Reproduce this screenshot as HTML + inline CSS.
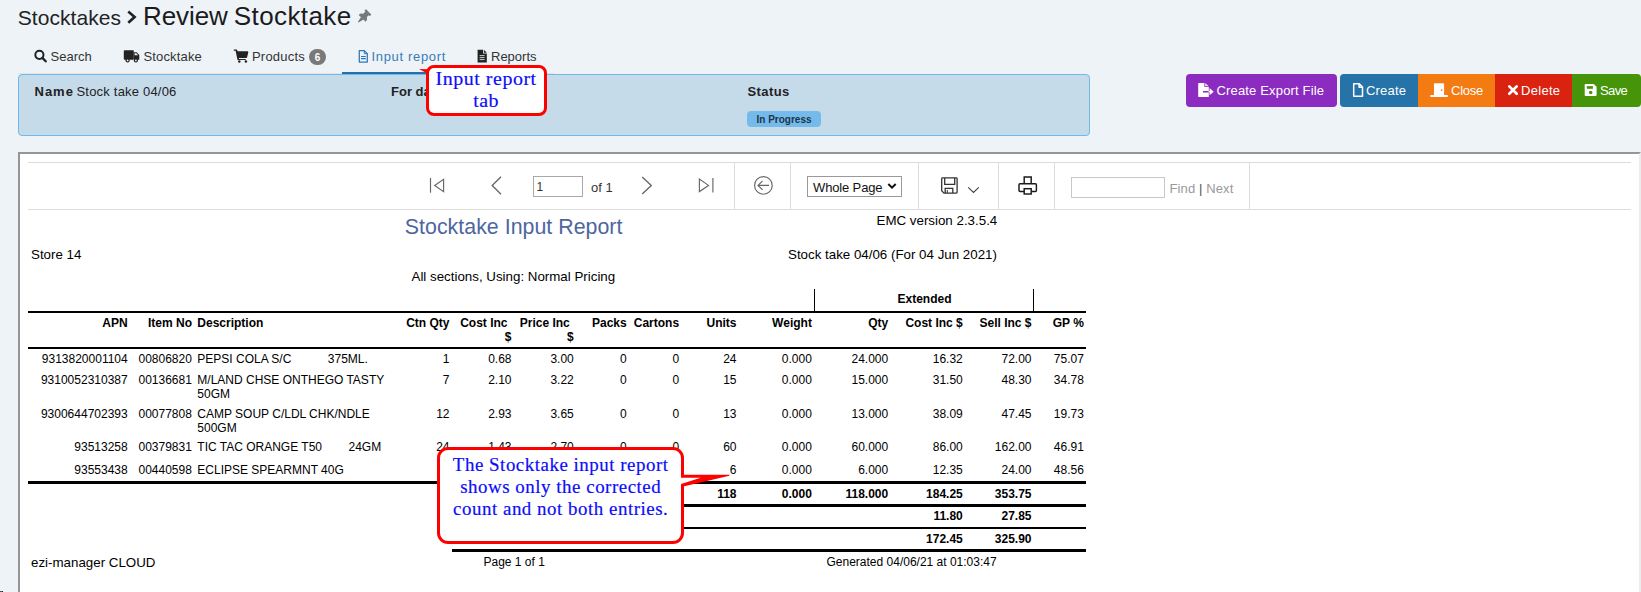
<!DOCTYPE html>
<html lang="en">
<head>
<meta charset="utf-8">
<title>Review Stocktake</title>
<style>
*{box-sizing:border-box;margin:0;padding:0}
html,body{width:1641px;height:592px;overflow:hidden}
body{background:#eef3f8;font-family:"Liberation Sans",sans-serif;color:#222;position:relative}
.a{position:absolute;white-space:nowrap;line-height:1}
svg{position:absolute;overflow:visible}
/* header */
.h-crumb{left:17.7px;top:7px;font-size:21px;color:#222;letter-spacing:0.08px}
.h-title{left:143px;top:3px;font-size:26px;color:#1b1b1b;letter-spacing:0.11px}
.tab{font-size:13px;color:#333;top:50px}
.tab.act{color:#3a7bb5}
/* panel */
.panel{left:18px;top:74px;width:1072px;height:62px;background:#c6dbea;border:1px solid #70b9e8;border-radius:4px}
.lbl{font-size:13px;font-weight:bold;color:#222}
.val{font-size:13px;color:#222}
.badge6{left:309.2px;top:48.6px;width:16.8px;height:16.6px;border-radius:8.4px;background:#797979;color:#fff;font-size:10px;font-weight:bold;text-align:center;line-height:18.4px}
.status{left:747px;top:111px;width:74px;height:16px;border-radius:4px;background:#74bbec;color:#1e3548;font-size:10px;font-weight:bold;text-align:center;line-height:17.2px}
/* buttons */
.btn{top:74px;height:33px;color:#fff;font-size:13px}
.btn span{position:absolute;top:10px;line-height:13px;white-space:nowrap}
/* iframe */
.frame{left:18px;top:152px;width:1623px;height:460px;background:#fff;border-style:solid;border-width:2px;border-color:#969696 #ececec #ececec #969696}
.hl{background:#dcdcdc;height:1px}
.vl{background:#dcdcdc;width:1px;top:162px;height:48px}
.tb{font-size:13px;color:#333}
.inp{background:#fff;border:1px solid #a9a9a9}
/* report */
.r{font-size:12px;color:#000}
.rb{font-size:12px;color:#000;font-weight:bold}
.r13{font-size:13.33px;color:#000}
.bl{background:#000}
.ra{width:120px;text-align:right}
/* callouts */
.co{background:#fff;border:3px solid #fe0000;color:#0c0cfa;-webkit-text-stroke:.18px #0c0cfa;font-family:"Liberation Serif",serif;font-size:19px;line-height:22px;text-align:center;white-space:nowrap;letter-spacing:.5px}
.co span{display:inline-block;transform:scaleX(1.05);transform-origin:50% 50%}
</style>
</head>
<body>

<!-- ======= page heading ======= -->
<div class="a h-crumb" id="crumb">Stocktakes</div>
<div class="a h-title" id="title" style="word-spacing:-1.2px"><span style="letter-spacing:-.09px">Review</span> <span style="letter-spacing:.39px">Stocktake</span></div>

<!-- ======= tabs ======= -->
<div class="a hl" style="left:18px;top:73px;width:536px;background:#e2e4e6"></div>
<div class="a tab" id="t1" style="left:50.5px">Search</div>
<div class="a tab" id="t2" style="letter-spacing:0.15px;left:143.5px">Stocktake</div>
<div class="a tab" id="t3" style="letter-spacing:0.2px;left:252px">Products</div>
<div class="a badge6">6</div>
<div class="a tab act" id="t4" style="letter-spacing:0.67px;left:371.5px">Input report</div>
<div class="a tab" id="t5" style="left:491px">Reports</div>
<div class="a ul" style="left:342px;top:71.7px;width:120px;height:2.7px;background:#2470a8"></div>

<!-- ======= info panel ======= -->
<div class="a panel"></div>
<div class="a lbl" id="p1" style="letter-spacing:1.0px;left:34.5px;top:85px">Name</div>
<div class="a val" id="p2" style="letter-spacing:0.2px;left:76.5px;top:85px">Stock take 04/06</div>
<div class="a lbl" id="p3" style="left:391px;top:85px">For date</div>
<div class="a lbl" id="p4" style="letter-spacing:0.4px;left:747.5px;top:85px">Status</div>
<div class="a status" id="p5">In Progress</div>

<!-- ======= buttons ======= -->
<div class="a btn" style="left:1186px;width:151px;background:#8c2bbf;border-radius:4px"><span id="b1" style="letter-spacing:0.16px;left:30.5px">Create Export File</span></div>
<div class="a btn" style="left:1340px;width:78px;background:#2573a8;border-radius:4px 0 0 4px"><span id="b2" style="letter-spacing:0.2px;left:26px">Create</span></div>
<div class="a btn" style="left:1418px;width:77px;background:#f47a12"><span id="b3" style="letter-spacing:-0.25px;left:33px">Close</span></div>
<div class="a btn" style="left:1495px;width:77px;background:#d9220f"><span id="b4" style="letter-spacing:0.3px;left:26px">Delete</span></div>
<div class="a btn" style="left:1572px;width:69px;background:#469409;border-radius:0 4px 4px 0"><span id="b5" style="letter-spacing:-0.6px;left:28px">Save</span></div>

<!-- ======= report frame ======= -->
<div class="a frame"></div>
<div class="a hl" style="left:28px;top:162px;width:1603px"></div>
<div class="a hl" style="left:28px;top:209px;width:1603px"></div>
<div class="a vl" style="left:734px"></div>
<div class="a vl" style="left:790px"></div>
<div class="a vl" style="left:918px"></div>
<div class="a vl" style="left:998px"></div>
<div class="a vl" style="left:1054px"></div>
<div class="a vl" style="left:1249px"></div>

<div class="a inp" style="left:533px;top:176px;width:50px;height:21px"></div>
<div class="a tb" id="tb1" style="left:536.5px;top:181px;font-size:12px">1</div>
<div class="a tb" id="tb2" style="left:591px;top:180.8px">of 1</div>
<div class="a inp" style="left:807px;top:176px;width:95px;height:21px;border-color:#9a9a9a;border-radius:0"></div>
<div class="a tb" id="tb3" style="letter-spacing:-0.14px;left:813px;top:181px;color:#111">Whole Page</div>
<div class="a inp" style="left:1071px;top:177px;width:94px;height:21px;border-color:#c8c8c8"></div>
<div class="a tb" id="tb4" style="letter-spacing:0.12px;left:1169.5px;top:182px;color:#999">Find <span style="color:#555">|</span> Next</div>

<!-- ======= report body ======= -->
<div class="a" id="rt" style="left:404.8px;top:217px;font-size:21.33px;letter-spacing:.03px;color:#4d66a0">Stocktake Input Report</div>
<div class="a r13" id="r1" style="left:876.5px;top:214px">EMC version 2.3.5.4</div>
<div class="a r13" id="r2" style="left:31px;top:248px">Store 14</div>
<div class="a r13" id="r3" style="left:788px;top:248px">Stock take 04/06 (For 04 Jun 2021)</div>
<div class="a r13" id="r4" style="left:411.5px;top:270px">All sections, Using: Normal Pricing</div>

<!--TBL-->
<div class="a bl" style="left:28px;top:311px;width:1058px;height:2px"></div>
<div class="a bl" style="left:28px;top:347px;width:1058px;height:2px"></div>
<div class="a bl" style="left:28px;top:481px;width:1058px;height:3px"></div>
<div class="a bl" style="left:452px;top:503.5px;width:634px;height:3px"></div>
<div class="a bl" style="left:452px;top:526.5px;width:634px;height:2px"></div>
<div class="a bl" style="left:452px;top:549px;width:634px;height:3px"></div>
<div class="a bl" style="left:814px;top:289px;width:1px;height:23px"></div>
<div class="a bl" style="left:1033px;top:289px;width:1px;height:23px"></div>
<div class="a rb" style="left:897.5px;top:293px">Extended</div>
<div class="a rb ra" style="left:7.7px;top:316.6px">APN</div>
<div class="a rb" style="left:148px;top:316.6px">Item No</div>
<div class="a rb" style="left:197.3px;top:316.6px">Description</div>
<div class="a rb ra" style="left:329.5px;top:316.6px">Ctn Qty</div>
<div class="a rb ra" style="left:387.5px;top:316.6px">Cost Inc</div>
<div class="a rb ra" style="left:391.5px;top:330.8px">$</div>
<div class="a rb ra" style="left:449.8px;top:316.6px">Price Inc</div>
<div class="a rb ra" style="left:453.8px;top:330.8px">$</div>
<div class="a rb ra" style="left:506.7px;top:316.6px">Packs</div>
<div class="a rb ra" style="left:559.1px;top:316.6px">Cartons</div>
<div class="a rb ra" style="left:616.5px;top:316.6px">Units</div>
<div class="a rb ra" style="left:691.9px;top:316.6px">Weight</div>
<div class="a rb ra" style="left:768.2px;top:316.6px">Qty</div>
<div class="a rb ra" style="left:842.8px;top:316.6px">Cost Inc $</div>
<div class="a rb ra" style="left:911.5px;top:316.6px">Sell Inc $</div>
<div class="a rb ra" style="left:963.9px;top:316.6px">GP %</div>
<div class="a r ra" style="left:7.7px;top:352.6px">9313820001104</div>
<div class="a r" style="left:138.5px;top:352.6px">00806820</div>
<div class="a r" style="left:197.3px;top:352.6px">PEPSI COLA S/C</div>
<div class="a r" style="left:327.8px;top:352.6px">375ML.</div>
<div class="a r ra" style="left:329.5px;top:352.6px">1</div>
<div class="a r ra" style="left:391.5px;top:352.6px">0.68</div>
<div class="a r ra" style="left:453.8px;top:352.6px">3.00</div>
<div class="a r ra" style="left:506.7px;top:352.6px">0</div>
<div class="a r ra" style="left:559.1px;top:352.6px">0</div>
<div class="a r ra" style="left:616.5px;top:352.6px">24</div>
<div class="a r ra" style="left:691.9px;top:352.6px">0.000</div>
<div class="a r ra" style="left:768.2px;top:352.6px">24.000</div>
<div class="a r ra" style="left:842.8px;top:352.6px">16.32</div>
<div class="a r ra" style="left:911.5px;top:352.6px">72.00</div>
<div class="a r ra" style="left:963.9px;top:352.6px">75.07</div>
<div class="a r ra" style="left:7.7px;top:373.6px">9310052310387</div>
<div class="a r" style="left:138.5px;top:373.6px">00136681</div>
<div class="a r" style="left:197.3px;top:373.6px">M/LAND CHSE ONTHEGO TASTY</div>
<div class="a r" style="left:197.3px;top:387.5px">50GM</div>
<div class="a r ra" style="left:329.5px;top:373.6px">7</div>
<div class="a r ra" style="left:391.5px;top:373.6px">2.10</div>
<div class="a r ra" style="left:453.8px;top:373.6px">3.22</div>
<div class="a r ra" style="left:506.7px;top:373.6px">0</div>
<div class="a r ra" style="left:559.1px;top:373.6px">0</div>
<div class="a r ra" style="left:616.5px;top:373.6px">15</div>
<div class="a r ra" style="left:691.9px;top:373.6px">0.000</div>
<div class="a r ra" style="left:768.2px;top:373.6px">15.000</div>
<div class="a r ra" style="left:842.8px;top:373.6px">31.50</div>
<div class="a r ra" style="left:911.5px;top:373.6px">48.30</div>
<div class="a r ra" style="left:963.9px;top:373.6px">34.78</div>
<div class="a r ra" style="left:7.7px;top:407.6px">9300644702393</div>
<div class="a r" style="left:138.5px;top:407.6px">00077808</div>
<div class="a r" style="left:197.3px;top:407.6px">CAMP SOUP C/LDL CHK/NDLE</div>
<div class="a r" style="left:197.3px;top:421.5px">500GM</div>
<div class="a r ra" style="left:329.5px;top:407.6px">12</div>
<div class="a r ra" style="left:391.5px;top:407.6px">2.93</div>
<div class="a r ra" style="left:453.8px;top:407.6px">3.65</div>
<div class="a r ra" style="left:506.7px;top:407.6px">0</div>
<div class="a r ra" style="left:559.1px;top:407.6px">0</div>
<div class="a r ra" style="left:616.5px;top:407.6px">13</div>
<div class="a r ra" style="left:691.9px;top:407.6px">0.000</div>
<div class="a r ra" style="left:768.2px;top:407.6px">13.000</div>
<div class="a r ra" style="left:842.8px;top:407.6px">38.09</div>
<div class="a r ra" style="left:911.5px;top:407.6px">47.45</div>
<div class="a r ra" style="left:963.9px;top:407.6px">19.73</div>
<div class="a r ra" style="left:7.7px;top:440.8px">93513258</div>
<div class="a r" style="left:138.5px;top:440.8px">00379831</div>
<div class="a r" style="left:197.3px;top:440.8px">TIC TAC ORANGE T50</div>
<div class="a r" style="left:348.5px;top:440.8px">24GM</div>
<div class="a r ra" style="left:329.5px;top:440.8px">24</div>
<div class="a r ra" style="left:391.5px;top:440.8px">1.43</div>
<div class="a r ra" style="left:453.8px;top:440.8px">2.70</div>
<div class="a r ra" style="left:506.7px;top:440.8px">0</div>
<div class="a r ra" style="left:559.1px;top:440.8px">0</div>
<div class="a r ra" style="left:616.5px;top:440.8px">60</div>
<div class="a r ra" style="left:691.9px;top:440.8px">0.000</div>
<div class="a r ra" style="left:768.2px;top:440.8px">60.000</div>
<div class="a r ra" style="left:842.8px;top:440.8px">86.00</div>
<div class="a r ra" style="left:911.5px;top:440.8px">162.00</div>
<div class="a r ra" style="left:963.9px;top:440.8px">46.91</div>
<div class="a r ra" style="left:7.7px;top:463.5px">93553438</div>
<div class="a r" style="left:138.5px;top:463.5px">00440598</div>
<div class="a r" style="left:197.3px;top:463.5px">ECLIPSE SPEARMNT 40G</div>
<div class="a r ra" style="left:329.5px;top:463.5px">12</div>
<div class="a r ra" style="left:391.5px;top:463.5px">2.06</div>
<div class="a r ra" style="left:453.8px;top:463.5px">4.00</div>
<div class="a r ra" style="left:506.7px;top:463.5px">0</div>
<div class="a r ra" style="left:559.1px;top:463.5px">0</div>
<div class="a r ra" style="left:616.5px;top:463.5px">6</div>
<div class="a r ra" style="left:691.9px;top:463.5px">0.000</div>
<div class="a r ra" style="left:768.2px;top:463.5px">6.000</div>
<div class="a r ra" style="left:842.8px;top:463.5px">12.35</div>
<div class="a r ra" style="left:911.5px;top:463.5px">24.00</div>
<div class="a r ra" style="left:963.9px;top:463.5px">48.56</div>
<div class="a rb ra" style="left:616.5px;top:487.7px">118</div>
<div class="a rb ra" style="left:691.9px;top:487.7px">0.000</div>
<div class="a rb ra" style="left:768.2px;top:487.7px">118.000</div>
<div class="a rb ra" style="left:842.8px;top:487.7px">184.25</div>
<div class="a rb ra" style="left:911.5px;top:487.7px">353.75</div>
<div class="a rb ra" style="left:842.8px;top:509.5px">11.80</div>
<div class="a rb ra" style="left:911.5px;top:509.5px">27.85</div>
<div class="a rb ra" style="left:842.8px;top:532.5px">172.45</div>
<div class="a rb ra" style="left:911.5px;top:532.5px">325.90</div>
<div class="a r13" style="left:31px;top:556px">ezi-manager CLOUD</div>
<div class="a r" style="left:483.5px;top:555.8px">Page 1 of 1</div>
<div class="a r" style="left:826.5px;top:555.8px">Generated 04/06/21 at 01:03:47</div>
<!--/TBL-->

<!--ICONS-->
<!-- ======= icons (page coordinates) ======= -->
<svg class="ic" style="left:0;top:0" width="1641" height="592" viewBox="0 0 1641 592">
 <!-- breadcrumb chevron -->
 <path d="M129.3 12.4 L134.6 17.1 L129.3 21.9" fill="none" stroke="#222" stroke-width="2.7" stroke-linecap="square" stroke-linejoin="miter"/>
 <!-- pin -->
 <g transform="translate(363.5 17) rotate(45)" fill="#787878">
  <rect x="-3.9" y="-7.3" width="7.8" height="2.2" rx=".6"/>
  <rect x="-2.5" y="-5.6" width="5" height="5"/>
  <path d="M-4.9 1.9 C-4.9 -1.5 -2.7 -2.4 0 -2.4 C2.7 -2.4 4.9 -1.5 4.9 1.9 Z"/>
  <path d="M-1.8 1.7 L1.8 1.7 L.4 7.5 L-.4 7.5 Z"/>
 </g>
 <!-- search -->
 <circle cx="39.4" cy="54.8" r="4.1" fill="none" stroke="#222" stroke-width="2"/>
 <path d="M42.6 58.1 L45.7 61.3" stroke="#222" stroke-width="2.3" stroke-linecap="round"/>
 <!-- truck -->
 <g fill="#222">
  <rect x="123.8" y="50.2" width="10" height="9.6" rx=".8"/>
  <path d="M133.8 52.2 h2.8 l2.7 2.9 v4.7 h-5.5 z"/>
  <circle cx="127.6" cy="60.4" r="2.1"/>
  <circle cx="135.9" cy="60.4" r="2.1"/>
 </g>
 <path d="M134.6 53.2 h1.6 l1.9 2.1 h-3.5 z" fill="#eef3f8"/>
 <circle cx="127.6" cy="60.4" r=".9" fill="#eef3f8"/>
 <circle cx="135.9" cy="60.4" r=".9" fill="#eef3f8"/>
 <!-- cart -->
 <g fill="#222">
  <path d="M233.8 49.6 h2.6 c.5 0 .8 .3 .9 .7 l.2 .9 h10 c.6 0 .9 .5 .8 1 l-1.2 5 c-.1 .4 -.5 .7 -.9 .7 h-7.4 l.2 1 h6.8 v1.2 h-7.6 c-.4 0 -.7 -.3 -.8 -.6 l-1.8 -8.7 h-1.8 z"/>
  <circle cx="239.3" cy="61.4" r="1.25"/>
  <circle cx="245.9" cy="61.4" r="1.25"/>
 </g>
 <!-- input report (file-text-o) -->
 <g fill="none" stroke="#2c78b6" stroke-width="1.25">
  <path d="M359.3 50.6 h5 l3 3 v8.4 h-8 z" stroke-linejoin="round"/>
  <path d="M364.3 50.8 v2.9 h2.9" stroke-width="1"/>
  <path d="M361 56.5 h4.8 M361 58.6 h4.8" stroke-width="1.1"/>
 </g>
 <!-- reports (file-text solid) -->
 <path d="M477.6 49.8 h5.4 v3.6 h3.8 v9 h-9.2 z" fill="#222"/>
 <path d="M483.8 49.8 l3 2.9 h-3 z" fill="#222"/>
 <path d="M479.6 55.6 h5 M479.6 57.6 h5 M479.6 59.6 h5" stroke="#dfe5ea" stroke-width=".9"/>

 <!-- btn: file export -->
 <g fill="#fff">
  <path d="M1198.2 83.6 c0 -.4 .3 -.6 .6 -.6 h5.6 v3.9 h4.4 v4.1 h-5.8 v1.4 h5.8 v4 c0 .3 -.3 .6 -.6 .6 h-9.4 c-.3 0 -.6 -.3 -.6 -.6 z"/>
  <path d="M1205.2 83 l3.6 3.3 h-3.6 z" opacity=".85"/>
  <path d="M1209.6 88 l4.1 3.65 l-4.1 3.65 z"/>
  <rect x="1208.6" y="91" width="1.6" height="1.4"/>
 </g>
 <!-- btn: file-o -->
 <path d="M1353.7 83.8 h5.6 l3.2 3.2 v9.2 h-8.8 z M1359.1 84 v3.2 h3.2" fill="none" stroke="#fff" stroke-width="1.5" stroke-linejoin="round"/>
 <!-- btn: door -->
 <g fill="#fff">
  <path d="M1434 84 c0 -.5 .4 -.8 .8 -.8 h8.5 c.5 0 .8 .3 .8 .8 v11 h-10.100 z"/>
  <rect x="1430.400" y="94.900" width="17.400" height="2" rx=".5"/>
 </g>
 <circle cx="1441.600" cy="90.100" r=".85" fill="#f47911"/>
 <!-- btn: times -->
 <path d="M1509.300 86.400 L1516.700 93.800 M1516.700 86.400 L1509.300 93.800" stroke="#fff" stroke-width="2.700" stroke-linecap="round"/>
 <!-- btn: save -->
 <path d="M1584.700 84.800 c0 -.5 .4 -.9 .9 -.9 h8.100 l2.900 2.900 v8.300 c0 .5 -.4 .9 -.9 .9 h-10.100 c-.5 0 -.9 -.4 -.9 -.9 z" fill="#fff"/>
 <rect x="1586.800" y="86.100" width="6.100" height="2.700" fill="#46940a"/>
 <circle cx="1590.700" cy="92.500" r="1.750" fill="#46940a"/>

 <!-- toolbar: first -->
 <g fill="none" stroke="#666" stroke-width="1.150">
  <path d="M430.500 178 V192.700"/>
  <path d="M443.600 179.400 V191.700 L434.700 185.500 Z" stroke-linejoin="miter"/>
  <path d="M501 176.800 L492.200 185.500 L501 194.200" stroke-width="1.350"/>
  <path d="M642.200 176.900 L651.300 185.500 L642.200 194.100" stroke-width="1.350"/>
  <path d="M699.400 179.100 V191.600 L708.500 185.400 Z"/>
  <path d="M712.900 178 V192.600"/>
  <circle cx="763.400" cy="185.400" r="8.800"/>
  <path d="M769 185.400 H758.200 M762.600 180.900 L758 185.400 L762.600 189.900"/>
 </g>
 <!-- select arrow -->
 <path d="M888.300 184 L892 187.700 L895.700 184" fill="none" stroke="#111" stroke-width="2"/>
 <!-- toolbar: save -->
 <g fill="none" stroke="#333" stroke-width="1.300">
  <path d="M942.500 177.900 h13.800 c.5 0 .8 .3 .8 .8 v13.600 c0 .5 -.3 .8 -.8 .8 h-12.300 l-2.300 -2.300 v-12.100 c0 -.5 .3 -.8 .8 -.8 z"/>
  <path d="M944.700 178 v6.300 h10 v-6.300"/>
  <path d="M945.200 193 v-4.700 h7.600 v4.700"/>
  <path d="M947.300 190 v3" stroke-width="1"/>
 </g>
 <path d="M968.200 187.300 L973.500 192.500 L978.800 187.300" fill="none" stroke="#444" stroke-width="1.150"/>
 <!-- toolbar: print -->
 <g fill="none" stroke="#1a1a1a" stroke-width="1.450">
  <path d="M1024.200 183.600 v-6.600 h7 v6.600"/>
  <path d="M1024.200 191.500 h-4.200 c-.6 0 -1 -.4 -1 -1 v-5.800 c0 -.6 .4 -1 1 -1 h15.400 c.6 0 1 .4 1 1 v5.800 c0 .6 -.4 1 -1 1 h-4.200"/>
  <rect x="1024.200" y="188.700" width="7" height="5.300"/>
 </g>
</svg>
<!--/ICONS-->

<!-- ======= callouts ======= -->
<div class="a co" id="c1" style="left:426px;top:65px;width:121px;height:51px;border-radius:8px;padding-top:0px"><span>Input report<br>tab</span></div>
<div class="a co" id="c2" style="left:437px;top:447px;width:247px;height:97px;border-radius:11px;padding-top:3.5px;font-size:18px"><span>The Stocktake input report<br>shows only the corrected<br>count and not both entries.</span></div>

<svg style="left:0;top:0" width="1641" height="592" viewBox="0 0 1641 592">
 <polygon points="419,69 427.5,69.3 426.4,72.9" fill="#fe0000"/>
 <polygon points="683,474.8 729.4,474.8 729.4,475.8 684.2,486.3 683,486.3" fill="#fe0000"/>
 <polygon points="680.9,477.8 700.7,477.8 684.2,483.1 680.9,484" fill="#fff"/>
</svg>
<div class="a" style="left:0;top:591px;width:1px;height:1px;background:#e00"></div>
<div class="a" style="left:1px;top:591px;width:1px;height:1px;background:#0a0"></div>
<div class="a" style="left:2px;top:591px;width:1px;height:1px;background:#00e"></div>
</body>
</html>
